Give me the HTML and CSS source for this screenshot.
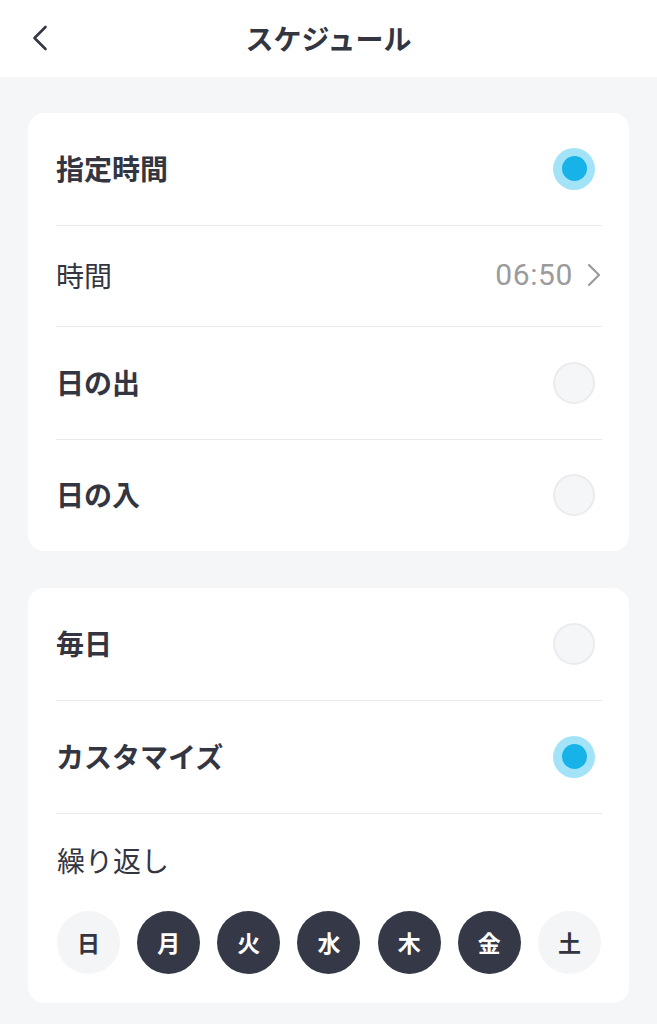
FILE: index.html
```html
<!DOCTYPE html>
<html lang="ja">
<head>
<meta charset="utf-8">
<title>スケジュール</title>
<link rel="stylesheet" href="styles.css">
</head>
<body>
<header class="topbar">
  <div class="back">
    <svg width="16" height="26" viewBox="0 0 16 26"><path d="M13.5 2 L2.5 13 L13.5 24" fill="none" stroke="#353845" stroke-width="2.6" stroke-linecap="round" stroke-linejoin="round"/></svg>
  </div>
  <h1 class="title">スケジュール</h1>
  <div></div>
</header>
<main class="page">
  <section class="card">
    <div class="row row-tall">
      <span class="label bold">指定時間</span>
      <span class="radio on"><span class="dot"></span></span>
    </div>
    <div class="row row-short">
      <span class="label">時間</span>
      <span class="value">06:50
        <svg class="chev" width="14" height="24" viewBox="0 0 14 24"><path d="M2 2 L12 12 L2 22" fill="none" stroke="#9a9a9a" stroke-width="2.2" stroke-linecap="round" stroke-linejoin="round"/></svg>
      </span>
    </div>
    <div class="row row-tall">
      <span class="label bold">日の出</span>
      <span class="radio"></span>
    </div>
    <div class="row row-last">
      <span class="label bold">日の入</span>
      <span class="radio"></span>
    </div>
  </section>
  <section class="card">
    <div class="row row-tall">
      <span class="label bold">毎日</span>
      <span class="radio"></span>
    </div>
    <div class="row row-tall">
      <span class="label bold">カスタマイズ</span>
      <span class="radio on"><span class="dot"></span></span>
    </div>
    <div class="repeat">
      <div class="label">繰り返し</div>
      <div class="days">
        <span class="day">日</span>
        <span class="day sel">月</span>
        <span class="day sel">火</span>
        <span class="day sel">水</span>
        <span class="day sel">木</span>
        <span class="day sel">金</span>
        <span class="day">土</span>
      </div>
    </div>
  </section>
</main>
</body>
</html>
```
FILE: styles.css
```css
* { box-sizing: border-box; }
html, body {
  margin: 0;
  padding: 0;
}
body {
  width: 657px;
  min-height: 1024px;
  background: #f5f6f8;
  font-family: "Noto Sans CJK JP", "Noto Sans", sans-serif;
  color: #333641;
}
.topbar {
  height: 77px;
  background: #ffffff;
  display: grid;
  grid-template-columns: 1fr auto 1fr;
  align-items: center;
}
.back {
  padding-left: 32px;
  display: flex;
  align-items: center;
  height: 77px;
  padding-bottom: 1px;
}
.back svg { display: block; }
.title {
  margin: 0;
  font-size: 28px;
  font-weight: 700;
  line-height: 1;
  color: #333641;
  padding-bottom: 2px;
}
.page {
  padding: 36px 28px 22px 28px;
  display: flex;
  flex-direction: column;
  gap: 37px;
}
.card {
  background: #ffffff;
  border-radius: 16px;
  padding: 0 27px 0 28px;
}
.row {
  display: flex;
  align-items: center;
  justify-content: space-between;
  border-bottom: 1px solid #e8e9ec;
}
.row-tall { height: 113px; }
.row-short { height: 101px; }
.row-last { height: 111px; border-bottom: none; }
.row .label { padding-bottom: 3px; }
.label {
  font-size: 28px;
  line-height: 1;
  font-weight: 400;
  color: #333641;
}
.label.bold { font-weight: 700; }
.radio {
  width: 42px;
  height: 42px;
  border-radius: 50%;
  margin-right: 7px;
  margin-bottom: 1px;
  background: #f4f6f8;
  border: 2px solid #e9ebee;
  display: flex;
  align-items: center;
  justify-content: center;
}
.radio.on {
  background: #a3e3f8;
  border: none;
}
.dot {
  width: 25px;
  height: 25px;
  border-radius: 50%;
  background: #17b3e8;
}
.value {
  display: flex;
  align-items: center;
  gap: 14px;
  font-family: Roboto, "Noto Sans", sans-serif;
  font-size: 30px;
  letter-spacing: 0.6px;
  color: #9b9b9b;
  line-height: 1;
  padding-bottom: 2px;
}
.chev { display: block; margin-right: 1px; }
.repeat {
  padding: 32px 1px 29px 1px;
}
.repeat .label { display: block; }
.days {
  margin-top: 37px;
  display: flex;
  justify-content: space-between;
}
.day {
  width: 63px;
  height: 63px;
  border-radius: 50%;
  background: #f4f5f7;
  color: #333641;
  font-size: 23px;
  font-weight: 700;
  display: flex;
  align-items: center;
  justify-content: center;
  line-height: 1;
}
.day.sel {
  background: #353846;
  color: #ffffff;
}
```
